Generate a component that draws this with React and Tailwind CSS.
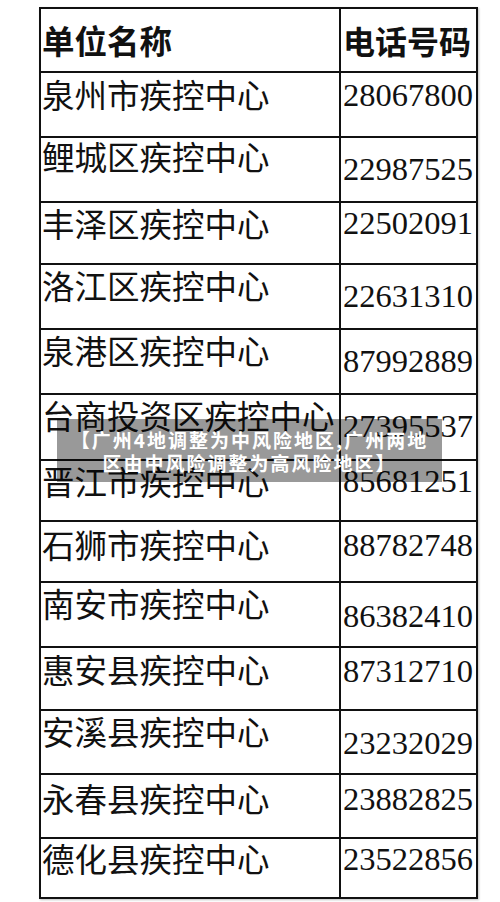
const rows = [
  { name: "泉州市疾控中心", tel: "28067800", h: "h-[65px]", np: "pt-[5px]", tp: "pt-[6px]" },
  { name: "鲤城区疾控中心", tel: "22987525", h: "h-[65px]", np: "pt-[2px]", tp: "pt-[15px]" },
  { name: "丰泽区疾控中心", tel: "22502091", h: "h-[62px]", np: "pt-[4px]", tp: "pt-[4px]" },
  { name: "洛江区疾控中心", tel: "22631310", h: "h-[65px]", np: "pt-[4px]", tp: "pt-[15px]" },
  { name: "泉港区疾控中心", tel: "87992889", h: "h-[65px]", np: "pt-[4px]", tp: "pt-[15px]" },
  { name: "台商投资区疾控中心", tel: "27395537", h: "h-[66px]", np: "pt-[4px]", tp: "pt-[15px]" },
  { name: "晋江市疾控中心", tel: "85681251", h: "h-[61px]", np: "pt-[4px]", tp: "pt-[4px]" },
  { name: "石狮市疾控中心", tel: "88782748", h: "h-[61px]", np: "pt-[6px]", tp: "pt-[7px]" },
  { name: "南安市疾控中心", tel: "86382410", h: "h-[65px]", np: "pt-[4px]", tp: "pt-[17px]" },
  { name: "惠安县疾控中心", tel: "87312710", h: "h-[63px]", np: "pt-[5px]", tp: "pt-[7px]" },
  { name: "安溪县疾控中心", tel: "23232029", h: "h-[64px]", np: "pt-[4px]", tp: "pt-[16px]" },
  { name: "永春县疾控中心", tel: "23882825", h: "h-[64px]", np: "pt-[7px]", tp: "pt-[8px]" },
  { name: "德化县疾控中心", tel: "23522856", h: "h-[60px]", np: "pt-[3px]", tp: "pt-[4px]" },
];

const sans = "font-['Noto_Sans_CJK_SC',sans-serif]";

export default function App() {
  return (
    <div className="relative w-[500px] h-[902px] bg-white pt-[7px] text-[#111]">
      <div className="ml-[39px] w-[439px] border-x-2 border-b-2 border-[#111] shadow-[1px_1px_2px_rgba(0,0,0,0.25)]">
        <div className="flex h-[64px] border-t-2 border-[#111]">
          <div className={`w-[300px] border-r-2 border-[#111] pl-[1px] pt-[15px] text-[32.5px] leading-[32px] font-bold ${sans}`}>
            单位名称
          </div>
          <div className={`flex-1 pl-[2px] pt-[15px] text-[32px] leading-[32px] font-bold whitespace-nowrap ${sans}`}>
            电话号码
          </div>
        </div>
        {rows.map((r) => (
          <div key={r.tel} className={`flex border-t-2 border-[#111] ${r.h}`}>
            <div className={`w-[300px] shrink-0 border-r-2 border-[#111] pl-[1px] text-[32.5px] leading-[32px] whitespace-nowrap ${sans} ${r.np}`}>
              {r.name}
            </div>
            <div className={`flex-1 pl-[2px] text-[32.5px] leading-[32px] whitespace-nowrap font-['Liberation_Serif',serif] ${r.tp}`}>
              {r.tel}
            </div>
          </div>
        ))}
      </div>

      <div className={`absolute left-[57px] top-[419px] w-[385px] h-[63px] bg-black/40 flex flex-col items-center justify-center text-white font-bold text-[19px] leading-[23px] tracking-[2px] ${sans}`}>
        <div className="whitespace-nowrap">【广州4地调整为中风险地区,广州两地</div>
        <div className="whitespace-nowrap">区由中风险调整为高风险地区】</div>
      </div>
    </div>
  );
}
